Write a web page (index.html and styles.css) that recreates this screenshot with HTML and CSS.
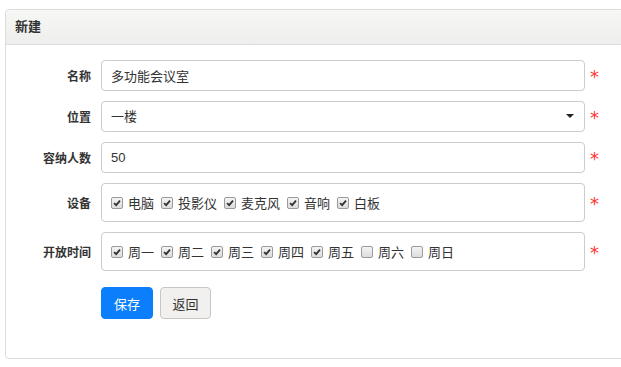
FILE: index.html
```html
<!DOCTYPE html>
<html lang="zh-CN">
<head>
    <meta charset="UTF-8">
    <title>新建会议室</title>
    <link rel="stylesheet" href="styles.css">
</head>
<body>
    <div class="panel">
        <div class="panel-heading">新建</div>
        <form class="panel-body">
            <div class="form-row">
                <label class="form-label">名称</label>
                <input class="form-control" type="text" value="多功能会议室">
                <span class="required">*</span>
            </div>
            <div class="form-row">
                <label class="form-label">位置</label>
                <div class="select-wrap">
                    <select class="form-control">
                        <option>一楼</option>
                    </select>
                </div>
                <span class="required">*</span>
            </div>
            <div class="form-row">
                <label class="form-label">容纳人数</label>
                <input class="form-control" type="text" value="50">
                <span class="required">*</span>
            </div>
            <div class="form-row">
                <label class="form-label">设备</label>
                <div class="check-group">
                    <span class="check-item"><span class="box checked"><svg viewBox="0 0 12 12"><path d="M2.5 6.2 L5 8.6 L9.6 3.2" /></svg></span>电脑</span>
                    <span class="check-item"><span class="box checked"><svg viewBox="0 0 12 12"><path d="M2.5 6.2 L5 8.6 L9.6 3.2" /></svg></span>投影仪</span>
                    <span class="check-item"><span class="box checked"><svg viewBox="0 0 12 12"><path d="M2.5 6.2 L5 8.6 L9.6 3.2" /></svg></span>麦克风</span>
                    <span class="check-item"><span class="box checked"><svg viewBox="0 0 12 12"><path d="M2.5 6.2 L5 8.6 L9.6 3.2" /></svg></span>音响</span>
                    <span class="check-item"><span class="box checked"><svg viewBox="0 0 12 12"><path d="M2.5 6.2 L5 8.6 L9.6 3.2" /></svg></span>白板</span>
                </div>
                <span class="required">*</span>
            </div>
            <div class="form-row">
                <label class="form-label">开放时间</label>
                <div class="check-group">
                    <span class="check-item"><span class="box checked"><svg viewBox="0 0 12 12"><path d="M2.5 6.2 L5 8.6 L9.6 3.2" /></svg></span>周一</span>
                    <span class="check-item"><span class="box checked"><svg viewBox="0 0 12 12"><path d="M2.5 6.2 L5 8.6 L9.6 3.2" /></svg></span>周二</span>
                    <span class="check-item"><span class="box checked"><svg viewBox="0 0 12 12"><path d="M2.5 6.2 L5 8.6 L9.6 3.2" /></svg></span>周三</span>
                    <span class="check-item"><span class="box checked"><svg viewBox="0 0 12 12"><path d="M2.5 6.2 L5 8.6 L9.6 3.2" /></svg></span>周四</span>
                    <span class="check-item"><span class="box checked"><svg viewBox="0 0 12 12"><path d="M2.5 6.2 L5 8.6 L9.6 3.2" /></svg></span>周五</span>
                    <span class="check-item"><span class="box"></span>周六</span>
                    <span class="check-item"><span class="box"></span>周日</span>
                </div>
                <span class="required">*</span>
            </div>
            <div class="form-actions">
                <button type="button" class="btn btn-primary">保存</button>
                <button type="button" class="btn btn-default">返回</button>
            </div>
        </form>
    </div>
</body>
</html>
```

FILE: styles.css
```css
* {
    margin: 0;
    padding: 0;
    box-sizing: border-box;
}

html, body {
    overflow: hidden;
}

body {
    font-family: "Liberation Sans", "Noto Sans CJK SC", sans-serif;
    font-size: 13px;
    color: #333;
    background: #fff;
    padding: 9px 0 0 5px;
}

.panel {
    width: 640px;
    border: 1px solid #ddd;
    border-radius: 4px;
    background: #fff;
}

.panel-heading {
    height: 35px;
    line-height: 33px;
    padding: 0 9px;
    font-weight: bold;
    font-size: 13px;
    color: #333;
    background: linear-gradient(#f7f7f6, #eeeeec);
    border-bottom: 1px solid #ddd;
    border-radius: 4px 4px 0 0;
}

.panel-body {
    padding: 15px 0 39px;
}

.form-row {
    display: flex;
    align-items: center;
    margin-bottom: 10px;
}

.form-label {
    width: 85px;
    margin-right: 10px;
    text-align: right;
    font-weight: bold;
    font-size: 12px;
    color: #333;
}

.form-control {
    width: 484px;
    height: 31px;
    padding: 0 9px;
    border: 1px solid #ccc;
    border-radius: 4px;
    font-family: inherit;
    font-size: 13px;
    color: #333;
    background: #fff;
    outline: none;
}

.select-wrap {
    position: relative;
}

.select-wrap select {
    appearance: none;
    -webkit-appearance: none;
    display: block;
}

/* little dropdown caret */
.select-wrap::after {
    content: '';
    position: absolute;
    right: 11px;
    top: 13px;
    border-left: 4px solid transparent;
    border-right: 4px solid transparent;
    border-top: 4px solid #222;
}

.required {
    margin-left: 5px;
    color: #f33;
    font-family: "DejaVu Sans", sans-serif;
    font-size: 18px;
    line-height: 1;
    padding-top: 2px;
}

.check-group {
    width: 484px;
    height: 39px;
    padding: 0 9px;
    border: 1px solid #ccc;
    border-radius: 4px;
    display: flex;
    align-items: center;
    gap: 7px;
}

.check-item {
    display: flex;
    align-items: center;
    font-size: 13px;
    color: #333;
}

.box {
    width: 12px;
    height: 12px;
    margin-right: 5px;
    border: 1px solid #9a9a9a;
    border-radius: 2px;
    background: linear-gradient(#f4f4f4, #dcdcdc);
    display: flex;
}

.box svg {
    width: 10px;
    height: 10px;
}

.box svg path {
    fill: none;
    stroke: #333;
    stroke-width: 2.2;
}

.form-actions {
    display: flex;
    gap: 7px;
    padding-left: 95px;
    margin-top: 16px;
}

.btn {
    height: 32px;
    padding: 0;
    border-radius: 4px;
    font-family: inherit;
    font-size: 13px;
    white-space: nowrap;
    cursor: pointer;
}

.btn-primary {
    width: 52px;
    background: #0b7ffb;
    border: 1px solid #0b7ffb;
    color: #fff;
}

.btn-default {
    width: 51px;
    background: #f1f0ee;
    border: 1px solid #c8c6c2;
    color: #333;
}
```
